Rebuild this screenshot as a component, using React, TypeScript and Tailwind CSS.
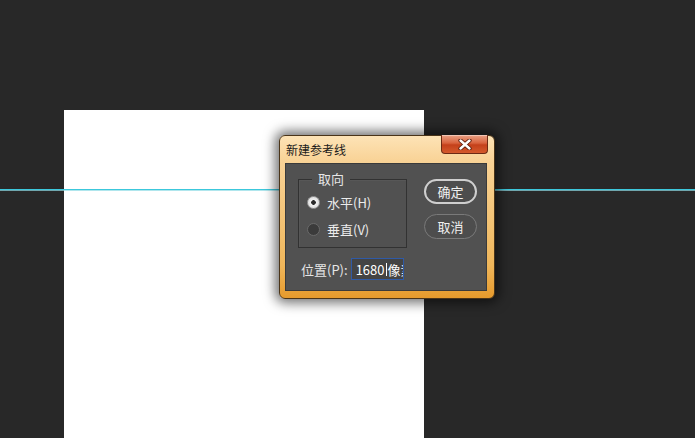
import React from "react";

const cjk = { fontFamily: '"Noto Sans CJK SC", "Noto Sans", sans-serif' };

export default function App() {
  return (
    <div className="relative w-[695px] h-[438px] overflow-hidden bg-[#282828]" style={cjk}>
      {/* canvas document */}
      <div className="absolute left-[64px] top-[110px] w-[360px] h-[340px] bg-white" />
      {/* guide line */}
      <div className="absolute left-0 top-[189px] w-[695px] flex flex-col">
        <div className="h-px bg-[#3cc8dc]" />
        <div className="h-px bg-[#8edbe6] opacity-70" />
      </div>

      {/* dialog */}
      <div className="absolute left-[279px] top-[135px] w-[216px] h-[164px] rounded-[6px] border border-[#4a3418] bg-[linear-gradient(180deg,#fde3b6_0%,#f9d397_15%,#f4c67c_45%,#efb65a_80%,#e69a2c_100%)] shadow-[0_0_12px_4px_rgba(0,0,0,0.55)] flex flex-col">
        {/* title bar */}
        <div className="relative h-[27px] flex items-center pl-[6px]">
          <span className="text-[12px] leading-none text-[#1a1a1a]">新建参考线</span>
          <div className="absolute top-[-1px] right-[6px] w-[47px] h-[19px] rounded-b-[4px] border border-[#6b2a14] border-t-0 bg-[linear-gradient(180deg,#eaa286_0%,#d8623c_45%,#c4401a_55%,#d45a2c_100%)] flex items-center justify-center shadow-[inset_0_1px_0_rgba(255,255,255,0.4)]">
            <svg width="14" height="11" viewBox="0 0 14 11">
              <path d="M2.5 1.5 L11.5 9.5 M11.5 1.5 L2.5 9.5" stroke="#5a1a08" strokeWidth="4.2" strokeLinecap="round" />
              <path d="M2.5 1.5 L11.5 9.5 M11.5 1.5 L2.5 9.5" stroke="#ffffff" strokeWidth="2.4" strokeLinecap="round" />
            </svg>
          </div>
        </div>
        {/* panel */}
        <div className="ml-[5px] mr-[7px] h-[128px] border border-[#3a3a3a] bg-[#515151] flex pl-[12px] pt-[15px]">
          <div className="flex flex-col w-[109px]">
            {/* group box */}
            <div className="relative w-[109px] h-[69px] border border-[#323232] shadow-[inset_1px_1px_0_rgba(255,255,255,0.04)]">
              <span className="absolute left-[13px] top-[-10px] px-[6px] bg-[#515151] text-[13px] leading-[18px] text-[#e6e6e6]">取向</span>
              <div className="flex flex-col pl-[8px] pt-[16px] gap-[14px]">
                <div className="flex items-center h-[13px]">
                  <div className="w-[13px] h-[13px] rounded-full bg-[radial-gradient(circle,#2a2a2a_0%,#2a2a2a_26%,#f2f2f2_33%,#d0d0d0_100%)] border border-[#9a9a9a]" />
                  <span className="ml-[7px] text-[13px] leading-none text-[#ececec]">水平(H)</span>
                </div>
                <div className="flex items-center h-[13px]">
                  <div className="w-[13px] h-[13px] rounded-full bg-[#3b3b3b] border border-[#6a6a6a]" />
                  <span className="ml-[7px] text-[13px] leading-none text-[#ececec]">垂直(V)</span>
                </div>
              </div>
            </div>
            {/* position row */}
            <div className="flex items-center mt-[10px] h-[22px]">
              <span className="ml-[3px] text-[13px] leading-none text-[#e6e6e6] whitespace-nowrap">位置(P):</span>
              <div className="ml-[3px] shrink-0 w-[53px] h-[22px] border border-[#2f5aa6] bg-[#444] flex items-center pl-[4px] overflow-hidden">
                <span className="text-[13px] leading-none text-white whitespace-nowrap">1680</span>
                <span className="shrink-0 w-px h-[13px] bg-white mx-[1px]" />
                <span className="text-[13px] leading-none text-white whitespace-nowrap">像素</span>
              </div>
            </div>
          </div>
          {/* buttons */}
          <div className="ml-[17px] flex flex-col gap-[10px]">
            <div className="w-[53px] h-[25px] rounded-full border-2 border-[#cfcfcf] bg-[#4d4d4d] flex items-center justify-center text-[13px] text-[#f0f0f0]">确定</div>
            <div className="w-[53px] h-[25px] rounded-full border border-[#7a7a7a] bg-[#4d4d4d] flex items-center justify-center text-[13px] text-[#f0f0f0]">取消</div>
          </div>
        </div>
      </div>
    </div>
  );
}
